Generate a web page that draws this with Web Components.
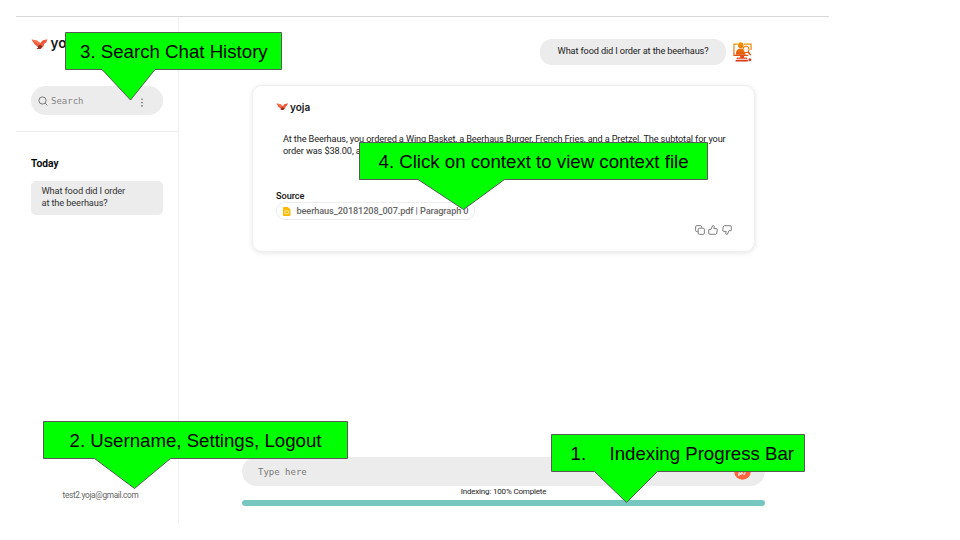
<!DOCTYPE html>
<html lang="en"><head><meta charset="utf-8"><title>Yoja chat</title>
<style>
html,body{margin:0;width:960px;height:540px;background:#fff;overflow:hidden}
body{position:relative;font-family:Roboto,"Liberation Sans",sans-serif}
</style></head><body>
<yoja-app></yoja-app>
<call-out style="left:65px;top:32px" w="217" h="38" base="37,90" tip="65.5,68" pad="15"><span>3. Search Chat History</span></call-out>
<call-out style="left:359px;top:142px" w="349" h="38" base="59,145.5" tip="104.5,67.5" pad="19.5"><span>4. Click on context to view context file</span></call-out>
<call-out style="left:43px;top:421px" w="305" h="38" base="51.5,127.5" tip="91.5,67.5" pad="26.5"><span>2. Username, Settings, Logout</span></call-out>
<call-out style="left:551px;top:434px" w="254" h="38" base="43.5,106.5" tip="75.5,68.5" pad="19.5"><span style="display:inline-block;width:39px">1.</span><span>Indexing Progress Bar</span></call-out>
<script>
const define = (name, html, init) => customElements.define(name, class extends HTMLElement {
  constructor() {
    super();
    this.attachShadow({mode: 'open'}).innerHTML = html;
  }
  connectedCallback() { if (init) init(this, this.shadowRoot); }
});

define('call-out', `<style>
:host{position:absolute;display:block;font:18.67px/40px "Liberation Sans",Arial,sans-serif;color:#000;white-space:pre}
svg{position:absolute;left:0;top:0;overflow:visible}
div{position:relative}
</style><svg><path fill="#0f0" stroke="#595959"/></svg><div><slot></slot></div>`, (el, root) => {
  const w = +el.getAttribute('w'), h = +el.getAttribute('h');
  const [a, b] = el.getAttribute('base').split(',');
  root.querySelector('svg').setAttribute('width', w);
  root.querySelector('svg').setAttribute('height', h);
  root.querySelector('path').setAttribute('d', `M.5 .5H${w - .5}V${h - .5}H${b}L${el.getAttribute('tip')}L${a} ${h - .5}H.5Z`);
  el.style.width = w + 'px';
  el.style.height = h + 'px';
  root.querySelector('div').style.paddingLeft = el.getAttribute('pad') + 'px';
});

define('yoja-logo', `<style>
:host{display:flex;align-items:center;gap:var(--gap,3px);font:600 var(--size,13px)/1 Inter,sans-serif;color:#17171c}
svg{width:var(--bird,16px);height:auto;flex:none}
</style><svg viewBox="0 0 16 10"><path d="M.6 .6 6.2 1.6 9 4.2 11 1.5 16 .2 14.8 3.3 12.9 4.7 12 7.2 9.6 9.4 5.4 9.8 7.2 8 3.4 5.2Z" fill="#f0583b"/><path d="M6.2 7.1 9 5.6 10.8 7 9.6 9.4 5.4 9.8 7.2 8Z" fill="#8e3020"/><path d="M.6 .6 6.2 1.6 9 4.2 7.6 5.6Z" fill="#ff7452"/></svg><span>yoja</span>`);

define('search-box', `<style>
:host{display:flex;align-items:center;box-sizing:border-box;height:29px;border-radius:15px;background:#ececec;padding:0 19px 0 7px;font:9px/12px "DejaVu Sans Mono",monospace;color:#858585}
span{flex:1;padding-left:3px}
</style><svg width="10" height="10" viewBox="0 0 10 10" fill="none" stroke="#777"><circle cx="4.5" cy="4.5" r="3.6"/><path d="m7.2 7.2 2.1 2.1"/></svg><span>Search</span><svg width="4" height="9" viewBox="0 0 4 9" fill="#666" style="margin-top:3px"><circle cx="2" cy="1.3" r=".8"/><circle cx="2" cy="4.6" r=".8"/><circle cx="2" cy="7.9" r=".8"/></svg>`);

define('side-bar', `<style>
:host{display:flex;flex-direction:column;box-sizing:border-box;width:163px;border-right:1px solid #f0f0f0;color:#000}
.top{height:115px;box-sizing:border-box;border-bottom:1px solid #ececec;padding:19px 15px 0;display:flex;flex-direction:column}
yoja-logo{height:16px;--size:13.5px;--bird:16.5px;--gap:3px}
search-box{margin-top:34px}
h2{font:500 10.2px/12px Roboto,sans-serif;margin:26px 15px 11px;-webkit-text-stroke:.15px}
.item{margin:0 15px;height:34px;box-sizing:border-box;border-radius:5px;background:#ececec;padding:4px 10px 0 10.5px;font-size:9.25px;letter-spacing:-.13px;line-height:12px;color:#333}
.user{margin-top:auto;margin-bottom:23px;padding-left:46.5px;font-size:8.3px;letter-spacing:-.33px;line-height:12px;color:#666}
</style><div class="top"><yoja-logo></yoja-logo><search-box></search-box></div><h2>Today</h2><div class="item">What food did I order<br>at the beerhaus?</div><div class="user">test2.yoja@gmail.com</div>`);

define('user-icon', `<style>:host{display:block;width:19px;height:20px}svg{display:block}</style>
<svg width="19" height="20" viewBox="0 0 20 20" preserveAspectRatio="none"><defs><linearGradient id="k" gradientUnits="userSpaceOnUse" x1="0" y1="0" x2="0" y2="20"><stop stop-color="#f39a00"/><stop offset="1" stop-color="#d92f18"/></linearGradient></defs>
<path d="M5 2.2H1V13.4H16M11.5 2.2H19V8" fill="none" stroke="url(#k)" stroke-width="1.2"/>
<circle cx="8.2" cy="3.2" r="2.9" fill="url(#k)"/><path d="M3 12.8C3 8.5 5 6.6 8.2 6.6S12 9 13.4 12.8Z" fill="url(#k)"/>
<circle cx="13.7" cy="7.4" r="3.1" fill="#fff2e8" stroke="url(#k)" stroke-width="1.1"/><path d="m15.8 9.8 2.8 3.4" stroke="#e05a12" stroke-width="1.6"/>
<path d="M7.6 13.4h4v2.1h-4ZM4.4 15.4H14.4L15.6 17.2H3.4ZM2.7 18h13v1.5H2.7Z" fill="url(#k)"/><path d="M5 16.3h9" stroke="#fff" stroke-width=".6" stroke-dasharray="1 1"/><circle cx="17.8" cy="17.7" r="1.5" fill="#dc3518"/></svg>`);

define('user-message', `<style>
:host{display:flex;justify-content:flex-end;align-items:center;gap:7px;height:26px;padding-right:3px}
div{box-sizing:border-box;width:186px;height:26px;border-radius:12px;background:#ececec;text-align:center;font-size:9.2px;letter-spacing:-.13px;line-height:24px;color:#222}
</style><div><slot></slot></div><user-icon></user-icon>`);

define('action-icons', `<style>:host{display:flex;gap:3.5px;justify-content:flex-end}svg{fill:none;stroke:#7c7c7c;stroke-width:1.1;stroke-linejoin:round}</style>
<svg width="10" height="10" viewBox="0 0 11 11"><rect x="3.5" y="3.5" width="6.8" height="6.8" rx="1.3"/><path d="M3 7.3H2Q.7 7.3.7 6.2V2Q.7.7 2 .7H6.2Q7.3.7 7.3 2V3"/></svg>
<svg width="10" height="10" viewBox="0 0 11 11"><path d="M1.2 4.8H3.3L5.1.7C6.3.4 6.9 1.2 6.8 2.2L6.4 4H8.9Q10.4 4 10.2 5.4L9.7 8.8Q9.5 10.2 8.2 10.2H2Q.8 10.2.8 9V5.2Z"/></svg>
<svg width="10" height="10" viewBox="0 0 11 11"><path d="M9.8 6.2H7.7L5.9 10.3C4.7 10.6 4.1 9.8 4.2 8.8L4.6 7H2.1Q.6 7 .8 5.6L1.3 2.2Q1.5.8 2.8.8H9Q10.2.8 10.2 2V5.8Z"/></svg>`);

define('source-chip', `<style>
:host{display:flex;align-items:center;box-sizing:border-box;width:199px;height:18px;border:1px solid #ededed;border-radius:9px;padding-left:6px;gap:6px;font:500 9.2px/12px Roboto,sans-serif;letter-spacing:-.12px;color:#666;white-space:nowrap}
</style><svg width="7.5" height="9" viewBox="0 0 8 9.5"><path d="M.8 0H5.2L8 2.7V8.7Q8 9.5 7.2 9.5H.8Q0 9.5 0 8.7V.8Q0 0 .8 0Z" fill="#fbba08"/><path d="M2 4.1H6V7H2Z" fill="#fbba08" stroke="#fff2c0" stroke-width=".8"/></svg><slot></slot>`);

define('answer-card', `<style>
:host{display:flex;flex-direction:column;box-sizing:border-box;width:503px;height:167px;border:1px solid #f0f0f0;border-radius:10px;box-shadow:0 1px 5px #0000001c;background:#fff;padding:14px 22.5px 0 23px}
yoja-logo{height:13px;--size:10px;--bird:12px;--gap:2px}
p{margin:20px 0 0 7px;font-size:9.2px;letter-spacing:-.125px;line-height:12px;color:#222;white-space:nowrap}
h3{font:500 9.2px/12px Roboto,sans-serif;letter-spacing:-.05px;margin:33px 0 0;color:#111}
action-icons{margin-top:5px}
</style><yoja-logo></yoja-logo><p>At the Beerhaus, you ordered a Wing Basket, a Beerhaus Burger, French Fries, and a Pretzel. The subtotal for your<br>order was $38.00, a</p><h3>Source</h3><source-chip>beerhaus_20181208_007.pdf | Paragraph 0</source-chip><action-icons></action-icons>`);

define('message-input', `<style>
:host{display:flex;align-items:center;justify-content:space-between;box-sizing:border-box;height:29px;border-radius:15px;background:#ececec;padding:0 14px 0 16px;font:9px/12px "DejaVu Sans Mono",monospace;color:#777}
</style><span>Type here</span><svg width="17" height="17" viewBox="0 0 17 17"><circle cx="8.5" cy="8.5" r="8.3" fill="#ff623d"/><path d="m4.5 12.5 1-4 7-4-2 7-2.5-1ZM5.5 11l4.5-3" fill="none" stroke="#fff"/></svg>`);

define('index-progress', `<style>
:host{display:block}
div{text-align:center;font-size:8px;letter-spacing:-.18px;line-height:12px;color:#222}
i{display:block;margin-top:2px;height:6px;border-radius:3px;background:#76c7c0}
</style><div>Indexing: 100% Complete</div><i></i>`);

define('chat-main', `<style>
:host{display:flex;flex-direction:column;box-sizing:border-box;flex:1;padding:22px 64px 18px 63px}
user-message{margin-right:10px}
answer-card{margin:20px 0 0 10px}
message-input{margin-top:auto}
</style><user-message>What food did I order at the beerhaus?</user-message><answer-card></answer-card><message-input></message-input><index-progress></index-progress>`);

define('yoja-app', `<style>
:host{display:flex;box-sizing:border-box;width:813px;height:508px;margin:16px 0 0 16px;border-top:1px solid #d8d8d8}
</style><side-bar></side-bar><chat-main></chat-main>`);
</script>
</body></html>
